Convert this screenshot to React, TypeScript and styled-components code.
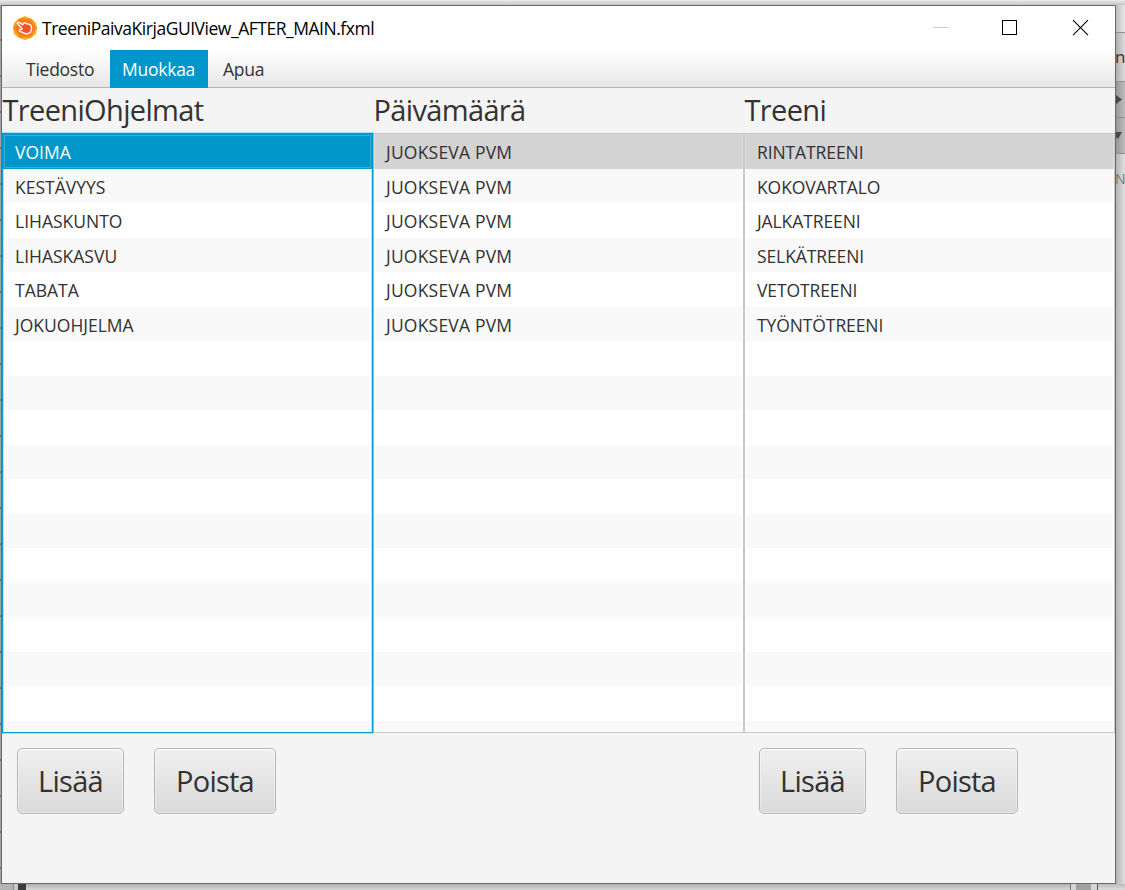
import React from 'react';
import styled, { createGlobalStyle, css } from 'styled-components';

const GlobalStyle = createGlobalStyle`
  * { box-sizing: border-box; }
  html, body { margin: 0; padding: 0; }
  body {
    width: 1125px; height: 890px; overflow: hidden;
    font-family: "Open Sans", "Noto Sans", sans-serif;
    color: #323232;
  }
`;

const Desktop = styled.div`
  width: 1125px; height: 890px;
  display: grid;
  grid-template: 5px 879px 6px / 1px 1115px 9px;
  overflow: hidden;
  background: #d2d2d2;
`;

const TopEdge = styled.div`
  grid-column: 1 / -1;
  background: linear-gradient(#ebebeb, #c4c4c4);
`;

const LeftEdge = styled.div`
  background: repeating-linear-gradient(#a3a3a3 0 34px, #707070 34px 36px);
`;

const RightEdge = styled.div`
  display: flex; flex-direction: column;
  overflow: hidden;
  background: linear-gradient(90deg, #b4b4b4, #e0e0e0);
`;

const EdgeCell = styled.div<{ $h: number; $bg: string; $line?: string }>`
  flex: none;
  display: flex; align-items: center;
  height: ${p => p.$h}px;
  overflow: hidden;
  background: ${p => p.$bg};
  border-bottom: 1px solid ${p => p.$line || 'transparent'};
  font-size: 18px; line-height: 20px;
  svg { display: block; }
`;

const EdgeLetter = styled.span<{ $color: string; $size: number; $shift: number }>`
  color: ${p => p.$color};
  font-size: ${p => p.$size}px;
  margin-left: ${p => p.$shift}px;
`;

const BottomEdge = styled.div`
  grid-column: 1 / -1;
  display: flex;
  background: linear-gradient(#b0b0b0, #d6d6d6);
`;

const Strip = styled.div<{ $w: number; $bg: string }>`
  width: ${p => p.$w}px;
  background: ${p => p.$bg};
`;

const Spacer = styled.div`flex: 1;`;

const Window = styled.div`
  display: flex; flex-direction: column;
  border: 1px solid #696969;
  background: #f4f4f4;
  min-width: 0;
`;

const TitleBar = styled.div`
  display: flex; align-items: center;
  height: 44px;
  padding-left: 10px;
  background: #fff;
  color: #000;
`;

const TitleText = styled.div`
  flex: 1;
  margin-left: 4px;
  font-size: 17.5px;
  letter-spacing: -0.47px;
  white-space: nowrap;
`;

const Controls = styled.svg`
  display: block; width: 183px; height: 44px;
`;

const MenuBar = styled.div`
  display: flex;
  height: 38px;
  padding-left: 12px;
  background: linear-gradient(#fff, #e6e6e6);
  box-shadow: inset 0 -1px #b5b5b5;
`;

const MenuItem = styled.div<{ $w: number; $active?: boolean }>`
  width: ${p => p.$w}px;
  padding-left: 12px;
  line-height: 39px;
  font-size: 17.5px;
  letter-spacing: -0.25px;
  white-space: nowrap;
  ${p => p.$active && css`background: #0096c9; color: #fff; margin-right: 3px;`}
`;

const Columns = styled.div`
  display: grid;
  grid-template-columns: repeat(3, 371px);
`;

const Column = styled.section`
  display: flex; flex-direction: column;
`;

const Heading = styled.div`
  height: 45px;
  line-height: 44px;
  font-size: 29px;
  letter-spacing: -0.65px;
  padding-left: 0.5px;
  white-space: nowrap;
`;

const List = styled.div<{ $focused?: boolean; $tracking: number }>`
  height: 600px;
  overflow: hidden;
  border: 1px solid ${p => (p.$focused ? '#039ed3' : '#c8c8c8')};
  background: #fff;
  letter-spacing: ${p => p.$tracking}px;
  ${p => p.$focused && css`
    position: relative;
    box-shadow: 0 0 0 1px rgba(3, 158, 211, 0.3), inset 0 0 0 1px #b9e4f3;
  `}
`;

const Row = styled.div<{ $state: 'odd' | 'even' | 'selected' | 'inactive' }>`
  height: 34.5px;
  padding-left: 11px;
  line-height: 36px;
  font-size: 17.5px;
  white-space: nowrap;
  margin: 0 1px;
  ${p => p.$state === 'odd' && css`background: #f9f9f9;`}
  ${p => p.$state === 'inactive' && css`
    background: #d3d3d3;
    box-shadow: -1px 0 #dedede, 1px 0 #dedede;
  `}
  ${p => p.$state === 'selected' && css`
    margin: 0;
    padding-left: 12px;
    color: #fff;
    background: #0096c9;
    box-shadow: inset 0 0 0 1px #0096c9, inset 0 0 0 2px #36aeda;
  `}
`;

const Actions = styled.div`
  display: flex; gap: 30px;
  padding: 15px 0 0 15px;
`;

const Button = styled.button<{ $w: number }>`
  width: ${p => p.$w}px; height: 66px;
  padding: 0;
  border: 1px solid #b5b5b5;
  border-radius: 5px;
  background: linear-gradient(#f0f0f0, #d9d9d9);
  box-shadow: inset 0 0 0 1px rgba(255, 255, 255, 0.4), inset 0 1px #fff, 0 1px #fafafa;
  color: #323232;
  font: 29px/64px "Open Sans", "Noto Sans", sans-serif;
  letter-spacing: -0.75px;
`;

const AppIcon = () => (
  <svg width="26" height="26" viewBox="0 0 26 26">
    <path d="M13 1l7 3 4 4 1 5-1 6-5 4-6 2-6-2-5-4-1-6 1-5 4-4z" fill="#fbb116" />
    <path d="M1 13L7 3.500h12L25 13l-6 9.500H7z" fill="#f79220" />
    <path d="M8 4.500h10l5 8.500-5 8.500H8L3 13z" fill="#f57a20" />
    <path d="M5.300 8c.8-1.300 2-.8 5.500 1.900l.8-1.900 2.200.2.800.7 1.600-.1.900.8 1.500.2 1.100 3.200-1.400 4.500-3.800 1.700-3.500-1.600-3.500-1.400.1-1.600 2.700-.4z" fill="#f0522b" stroke="#fff" strokeWidth="1.300" strokeLinejoin="round" />
  </svg>
);

const WindowControls = () => (
  <Controls viewBox="0 0 183 44" shapeRendering="crispEdges">
    <path d="M1 21.500h15" stroke="#cbcbcb" />
    <rect x="70.500" y="14.500" width="14" height="14" fill="none" stroke="#000" />
    <path d="M141 14.200l15 15M156 14.200l-15 15" stroke="#000" strokeWidth="1.100" shapeRendering="geometricPrecision" />
  </Controls>
);

const programs = ['VOIMA', 'KESTÄVYYS', 'LIHASKUNTO', 'LIHASKASVU', 'TABATA', 'JOKUOHJELMA'];
const dates = Array.from({ length: 6 }, () => 'JUOKSEVA PVM');
const workouts = ['RINTATREENI', 'KOKOVARTALO', 'JALKATREENI', 'SELKÄTREENI', 'VETOTREENI', 'TYÖNTÖTREENI'];

interface ListColumnProps {
  title: string;
  items: string[];
  tracking: number;
  focused?: boolean;
  actions?: boolean;
}

const ListColumn = ({ title, items, tracking, focused, actions }: ListColumnProps) => (
  <Column>
    <Heading>{title}</Heading>
    <List $focused={focused} $tracking={tracking}>
      {Array.from({ length: 18 }, (_, i) => (
        <Row key={i} $state={i === 0 ? (focused ? 'selected' : 'inactive') : i % 2 ? 'odd' : 'even'}>
          {items[i]}
        </Row>
      ))}
    </List>
    {actions && (
      <Actions>
        <Button $w={107}>Lisää</Button>
        <Button $w={122}>Poista</Button>
      </Actions>
    )}
  </Column>
);

export default function App() {
  return (
    <>
      <GlobalStyle />
      <Desktop>
        <TopEdge />
        <LeftEdge />
        <Window>
          <TitleBar>
            <AppIcon />
            <TitleText>TreeniPaivaKirjaGUIView_AFTER_MAIN.fxml</TitleText>
            <WindowControls />
          </TitleBar>
          <MenuBar>
            <MenuItem $w={96}>Tiedosto</MenuItem>
            <MenuItem $w={98} $active>Muokkaa</MenuItem>
            <MenuItem $w={70}>Apua</MenuItem>
          </MenuBar>
          <Columns>
            <ListColumn title="TreeniOhjelmat" items={programs} tracking={0} focused actions />
            <ListColumn title="Päivämäärä" items={dates} tracking={0.2} />
            <ListColumn title="Treeni" items={workouts} tracking={-0.1} actions />
          </Columns>
        </Window>
        <RightEdge>
          <EdgeCell $h={28} $bg="linear-gradient(90deg, #bdbdbd, #e8e8e8)" $line="#8f8f8f" />
          <EdgeCell $h={49} $bg="linear-gradient(90deg, #b0b0b0, #dcdcdc)" $line="#8f8f8f">
            <EdgeLetter $color="#4a2a20" $size={17} $shift={-1}>n</EdgeLetter>
          </EdgeCell>
          <EdgeCell $h={36} $bg="linear-gradient(90deg, #969696, #bdbdbd)" $line="#8f8f8f">
            <svg width="9" height="10"><path d="M0 0l6 4.500L0 9z" fill="#484848" /></svg>
          </EdgeCell>
          <EdgeCell $h={36} $bg="linear-gradient(90deg, #969696, #bdbdbd)" $line="#8f8f8f">
            <svg width="9" height="10"><path d="M0 1h6L2 8 0 6z" fill="#484848" /></svg>
          </EdgeCell>
          <EdgeCell $h={50} $bg="transparent">
            <EdgeLetter $color="#777" $size={14} $shift={-1}>N</EdgeLetter>
          </EdgeCell>
        </RightEdge>
        <BottomEdge>
          <Strip $w={13} $bg="#b4b4b4" />
          <Strip $w={1} $bg="#8c8c8c" />
          <Strip $w={4} $bg="#c9c9c9" />
          <Strip $w={8} $bg="#3c3c3c" />
          <Spacer />
          <Strip $w={1} $bg="#777" />
          <Strip $w={5} $bg="#d6d6d6" />
          <Strip $w={15} $bg="#a2a2a2" />
          <Strip $w={6} $bg="#d6d6d6" />
          <Strip $w={1} $bg="#555" />
          <Strip $w={27} $bg="linear-gradient(#bcbcbc, #dcdcdc)" />
        </BottomEdge>
      </Desktop>
    </>
  );
}
